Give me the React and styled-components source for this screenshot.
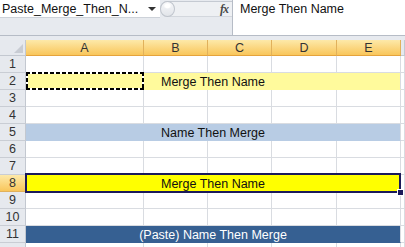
import styled, { createGlobalStyle, css } from 'styled-components';

const GlobalStyle = createGlobalStyle`
  html, body {
    margin: 0;
    padding: 0;
    background: #ffffff;
  }
  body {
    width: 405px;
    height: 247px;
    overflow: hidden;
    font-family: 'Liberation Sans', Arial, sans-serif;
  }
`;

const Window = styled.div`
  width: 405px;
  height: 247px;
  overflow: hidden;
  background: #ffffff;
`;

const FormulaBar = styled.div`
  display: flex;
  height: 35px;
  background: #e7eaef;
  border-bottom: 1px solid #b6bcc6;
`;

const NameColumn = styled.div`
  width: 160px;
  display: flex;
  flex-direction: column;
`;

const NameBox = styled.div`
  height: 17px;
  background: #ffffff;
  display: flex;
  align-items: center;
  justify-content: space-between;
  padding: 0 4px 0 2px;
  font-size: 12.5px;
  color: #111;
  border-bottom: 1px solid #cdd2d9;
`;

const DropArrow = styled.span`
  width: 0;
  height: 0;
  border-left: 4px solid transparent;
  border-right: 4px solid transparent;
  border-top: 4px solid #333;
  margin-top: 1px;
`;

const ToolPill = styled.div`
  width: 72px;
  height: 16px;
  margin-top: 1px;
  border-top: 1px solid #c5cad2;
  border-bottom: 1px solid #d3d7dd;
  border-radius: 8px 0 0 8px;
  background: #eef0f3;
  display: flex;
  align-items: center;
  justify-content: space-between;
  padding-right: 4px;
  box-sizing: border-box;
`;

const Knob = styled.span`
  width: 15px;
  height: 16px;
  margin-left: 0;
  box-sizing: border-box;
  border-radius: 50%;
  border: 1px solid #bfc4cc;
  background:
    radial-gradient(ellipse 4px 3px at 50% 28%, #ffffff 0 60%, transparent 100%),
    linear-gradient(#f7f8fa, #e1e4e9);
`;

const Fx = styled.span`
  font-family: 'Liberation Serif', 'Times New Roman', serif;
  font-style: italic;
  font-weight: bold;
  font-size: 12px;
  color: #4a4a4a;
  letter-spacing: -1px;
`;

const FormulaInput = styled.div`
  flex: 1;
  background: #ffffff;
  border-left: 1px solid #b6bcc6;
  padding: 1px 0 0 7px;
  font-size: 12.5px;
  color: #111;
  line-height: 17px;
`;

const Gap = styled.div`
  height: 4px;
  background: #e7eaef;
`;

const Sheet = styled.div`
  display: grid;
  grid-template-columns: 26px 118px 64px 64px 65px 64px 1fr;
  grid-template-rows: 16px repeat(12, 17px);
`;

const gridLine = css`
  box-sizing: border-box;
  border-right: 1px solid #d9dce1;
  border-bottom: 1px solid #d9dce1;
`;

const Corner = styled.div`
  box-sizing: border-box;
  background: #e6e9ee;
  border-right: 1px solid #c3c8d0;
  border-bottom: 1px solid #c3c8d0;
  position: relative;
  &::after {
    content: '';
    position: absolute;
    right: 2px;
    bottom: 2px;
    width: 0;
    height: 0;
    border-left: 9px solid transparent;
    border-bottom: 9px solid #c8ccd3;
  }
`;

const ColHead = styled.div`
  box-sizing: border-box;
  display: flex;
  align-items: center;
  justify-content: center;
  font-size: 12.5px;
  color: #333;
  background: ${p => (p.$active ? 'linear-gradient(#fde9a9, #f9c65b)' : '#e6e9ee')};
  border-right: 1px solid ${p => (p.$active ? '#e1b15b' : '#c3c8d0')};
  border-bottom: 1px solid ${p => (p.$active ? '#e5a33c' : '#c3c8d0')};
`;

const RowHead = styled.div`
  box-sizing: border-box;
  display: flex;
  align-items: flex-start;
  justify-content: center;
  padding-top: 1px;
  line-height: 15px;
  font-size: 12.5px;
  color: #333;
  background: ${p => (p.$active ? 'linear-gradient(#fde9a9, #f9c65b)' : '#e6e9ee')};
  border-right: 1px solid ${p => (p.$active ? '#e5a33c' : '#c3c8d0')};
  border-bottom: 1px solid ${p => (p.$active ? '#e1b15b' : '#c9cdd4')};
`;

const Cell = styled.div`
  ${gridLine}
`;

const Merged = styled.div`
  ${gridLine}
  grid-column: span 5;
  position: relative;
  display: flex;
  align-items: center;
  justify-content: center;
  font-size: 12.5px;
  padding-top: 1px;
  background: ${p => p.$fill};
  color: ${p => p.$ink || '#111'};
  ${p => p.$fill !== '#ffffff' && css`border-bottom-color: ${p.$fill};`}
`;

const dash = (dir) =>
  `repeating-linear-gradient(${dir}, #000 0 4px, #fff 4px 6px)`;

const Ants = styled.span`
  position: absolute;
  left: 0;
  top: -1px;
  width: 118px;
  height: 18px;
  box-sizing: border-box;
  background:
    ${dash('to right')} top / 100% 2px no-repeat,
    ${dash('to right')} bottom / 100% 2px no-repeat,
    ${dash('to bottom')} left / 2px 100% no-repeat,
    ${dash('to bottom')} right / 2px 100% no-repeat;
`;

const Selection = styled.span`
  position: absolute;
  left: -1px;
  top: -2px;
  right: -1px;
  bottom: -2px;
  border: 2px solid #1b1a5a;
  &::after {
    content: '';
    position: absolute;
    right: -5px;
    bottom: -5px;
    width: 5px;
    height: 5px;
    background: #1b1a5a;
    border: 1px solid #fff;
  }
`;

const rows = [
  { n: 1 },
  { n: 2, fill: '#fffa9c', text: 'Merge Then Name', ants: true },
  { n: 3 },
  { n: 4 },
  { n: 5, fill: '#b8cce4', text: 'Name Then Merge' },
  { n: 6 },
  { n: 7 },
  { n: 8, fill: '#ffff00', text: 'Merge Then Name', selected: true },
  { n: 9 },
  { n: 10 },
  { n: 11, fill: '#366092', ink: '#ffffff', text: '(Paste) Name Then Merge' },
];

const columns = ['A', 'B', 'C', 'D', 'E'];

export default function App() {
  return (
    <Window>
      <GlobalStyle />
      <FormulaBar>
        <NameColumn>
          <NameBox>
            Paste_Merge_Then_N...
            <DropArrow />
          </NameBox>
        </NameColumn>
        <ToolPill>
          <Knob />
          <Fx>fx</Fx>
        </ToolPill>
        <FormulaInput>Merge Then Name</FormulaInput>
      </FormulaBar>
      <Gap />
      <Sheet>
        <Corner />
        {columns.map(c => (
          <ColHead key={c} $active>{c}</ColHead>
        ))}
        <ColHead />
        {rows.map(r => (
          <RowBlock key={r.n} row={r} />
        ))}
        <RowHead />
        {columns.map(c => <Cell key={c} />)}
        <Cell />
      </Sheet>
    </Window>
  );
}

function RowBlock({ row }) {
  return (
    <>
      <RowHead $active={row.selected}>{row.n}</RowHead>
      {row.text ? (
        <Merged $fill={row.fill} $ink={row.ink}>
          {row.text}
          {row.ants && <Ants />}
          {row.selected && <Selection />}
        </Merged>
      ) : (
        columns.map(c => <Cell key={c} />)
      )}
      <Cell />
    </>
  );
}
